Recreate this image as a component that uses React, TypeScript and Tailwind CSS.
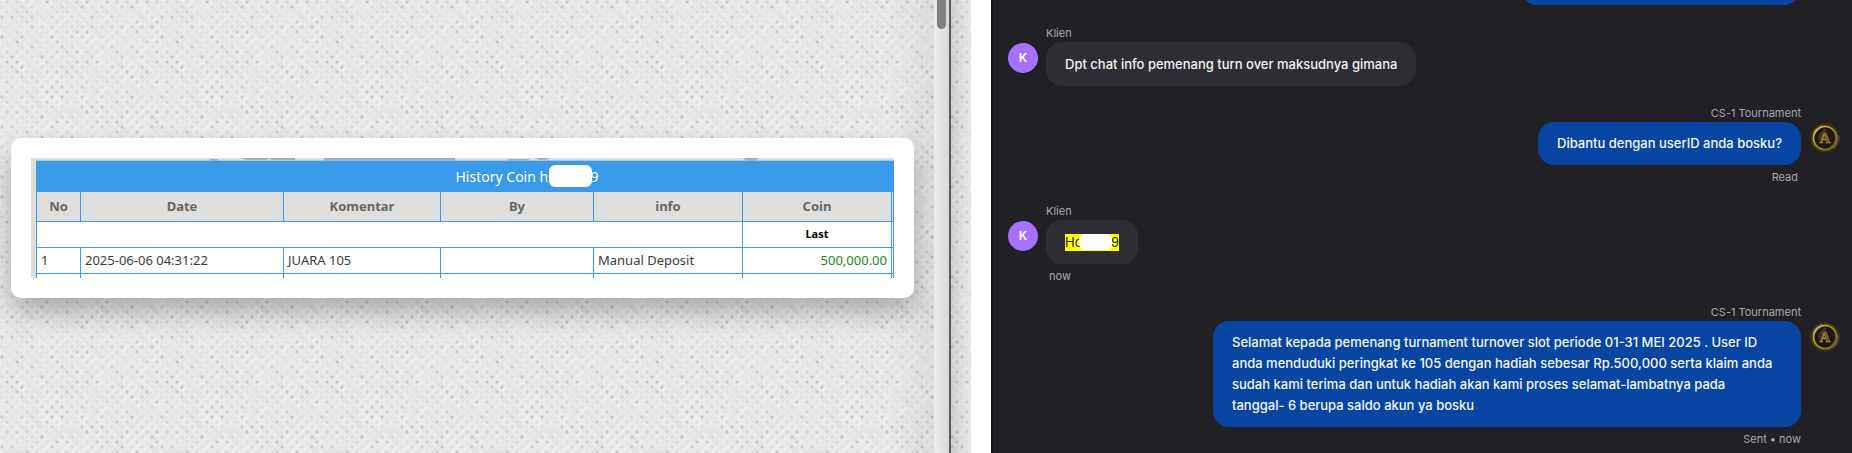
import { useId } from 'react'
import clsx from 'clsx'

const columns = ['No', 'Date', 'Komentar', 'By', 'info', 'Coin']

const rows = [
  { no: '1', date: '2025-06-06 04:31:22', comment: 'JUARA 105', by: '', info: 'Manual Deposit', coin: '500,000.00' },
]

const noise = (n: number) => {
  const v = Math.sin(n * 127.1 + 11.7) * 43758.5453
  return v - Math.floor(v)
}

// dots of the paper texture, one tile of 160x160
const dots = Array.from({ length: 512 }, (_, i) => {
  const row = Math.floor(i / 16)
  return {
    x: (i % 16) * 10 + (row % 2 ? 2 : 7),
    y: row * 5 + 2,
    opacity: 0.04 + noise(i) * noise(i) * 0.18,
  }
})

function PaperTexture() {
  const id = useId()
  return (
    <svg className="absolute inset-0 h-full w-full" aria-hidden="true">
      <defs>
        <pattern id={id} width="160" height="160" patternUnits="userSpaceOnUse">
          {dots.map((d, i) => (
            <g key={i}>
              <path
                d={`M${d.x - 5} ${d.y} l5 -5 M${d.x} ${d.y + 5} l5 -5`}
                stroke={noise(i + 900) > 0.5 ? '#dfdfdf' : '#f1f1f1'}
                strokeWidth="2"
                opacity="0.5"
              />
              <circle cx={d.x} cy={d.y} r="2.2" fill="#444" opacity={d.opacity * 0.4} />
              <circle cx={d.x} cy={d.y} r="1.1" fill="#444" opacity={d.opacity} />
            </g>
          ))}
        </pattern>
      </defs>
      <rect width="100%" height="100%" fill={`url(#${id})`} />
    </svg>
  )
}

// sliver of the banner that shows above the table
function BannerEdge() {
  return (
    <svg className="block h-[3px] w-full" viewBox="0 0 858 3" preserveAspectRatio="none" aria-hidden="true">
      <g fill="#a9b0b8">
        <rect x="174" y="1" width="8" height="2" />
        <path d="M204 0 H259 V2 H235 V1 H231 V2 H211Z" />
        <path d="M289 0 H419 V3 H287Z" />
        <path d="M471 1 H493 V3 H473Z" />
        <path d="M499 0 H515 L509 2 H503Z" />
        <path d="M707 0 H723 L719 3 H711Z" />
      </g>
      <rect y="2" width="858" height="1" fill="#8fb0cc" opacity="0.6" />
    </svg>
  )
}

function HistoryTable() {
  const cell = 'border border-[#3a99e8] px-1'
  return (
    <div className="h-[120px] overflow-hidden bg-[#deded9] pl-[5px]">
      <BannerEdge />
      <table className="w-full table-fixed border-collapse bg-white text-[13px] text-[#3c3c3c]">
        <colgroup>
          <col className="w-[44px]" />
          <col className="w-[203px]" />
          <col className="w-[157px]" />
          <col className="w-[153px]" />
          <col className="w-[149px]" />
          <col className="w-[149px]" />
          <col />
        </colgroup>
        <thead>
          <tr className="h-[30px] bg-[#3a9aea] text-[14px] text-white">
            <th colSpan={7} className="border border-[#3a99e8] p-0 pl-[124px] font-normal">
              <span className="relative inline-flex w-[143px] justify-between leading-5 whitespace-nowrap">
                <span>History Coin h</span>
                <span>9</span>
                <span className="absolute right-[7px] bottom-0 h-[22px] w-[43px] rounded-md bg-white" />
              </span>
            </th>
          </tr>
          <tr className="h-[30px] bg-[#dedede] text-[#666]">
            {columns.map((name) => (
              <th key={name} className="border border-[#3a99e8] p-0 font-bold">{name}</th>
            ))}
            <th className="border border-[#3a99e8] p-0" />
          </tr>
        </thead>
        <tbody>
          <tr className="h-[26px]">
            <td colSpan={5} className="border border-[#3a99e8] p-0" />
            <td className="border border-[#3a99e8] p-0 text-center text-[11px] font-bold text-black">Last</td>
            <td className="border border-[#3a99e8] p-0" />
          </tr>
          {rows.map((row) => (
            <tr key={row.no} className="h-[26px]">
              <td className={cell}>{row.no}</td>
              <td className={cell}>{row.date}</td>
              <td className={cell}>{row.comment}</td>
              <td className={cell}>{row.by}</td>
              <td className={cell}>{row.info}</td>
              <td className={clsx(cell, 'text-right text-[#1a8a1a]')}>{row.coin}</td>
              <td className="border border-[#3a99e8] p-0" />
            </tr>
          ))}
          <tr className="h-[26px]">
            {[...columns, 'more'].map((name) => (
              <td key={name} className="border border-[#3a99e8] p-0" />
            ))}
          </tr>
        </tbody>
      </table>
    </div>
  )
}

function HistoryPanel() {
  return (
    <section className="relative flex bg-[#e9e9e9] font-['Noto_Sans',sans-serif]">
      <PaperTexture />
      <div className="relative flex min-w-0 flex-1 items-start bg-linear-to-r from-transparent from-95% to-black/5 pt-[138px] pr-5 pl-[11px]">
        <div className="w-full rounded-[10px] bg-white p-5 shadow-[0_14px_26px_rgba(0,0,0,0.26)]">
          <HistoryTable />
        </div>
      </div>
      <div className="relative w-[15px] bg-linear-to-r from-[#ececec] to-[#d8d8d8] px-[3px]">
        <div className="h-[29px] rounded-b-full bg-[#808080]" />
      </div>
      <div className="relative w-[2px] bg-[#5c5c5c]" />
      <div className="relative w-5 bg-linear-to-r from-black/10 to-transparent" />
    </section>
  )
}

function AgentAvatar() {
  return (
    <svg className="h-[30px] w-[30px]" viewBox="0 0 30 30" role="img" aria-label="CS-1 Tournament">
      <defs>
        <radialGradient id="glow">
          <stop offset="0.6" stopColor="#14120c" />
          <stop offset="0.85" stopColor="#4a4014" />
          <stop offset="1" stopColor="#262318" />
        </radialGradient>
        <linearGradient id="ring" x1="0" y1="0" x2="1" y2="1">
          <stop offset="0" stopColor="#e3cf62" />
          <stop offset="0.5" stopColor="#a88c2a" />
          <stop offset="1" stopColor="#77621b" />
        </linearGradient>
      </defs>
      <circle cx="15" cy="15" r="15" fill="url(#glow)" />
      <path d="M4 7 L12 1 L12 5 L3 14Z" fill="#8f8a66" opacity="0.45" />
      <path d="M25 11 L29.5 13 A15 15 0 0 1 24 26 L20 22Z" fill="#5a5746" opacity="0.6" />
      <circle cx="15" cy="15" r="11.5" fill="none" stroke="url(#ring)" strokeWidth="1.6" />
      <circle cx="15" cy="15" r="9.8" fill="#1c1912" />
      <path d="M8 13 L14 5.5 L17 6 L9 19Z" fill="#77735c" opacity="0.35" />
      <text
        x="15"
        y="20"
        textAnchor="middle"
        fontFamily="Liberation Serif, serif"
        fontSize="15"
        fontWeight="bold"
        fill="#6d5014"
        stroke="#c9a244"
        strokeWidth="0.5"
      >
        A
      </text>
    </svg>
  )
}

type MessageProps = {
  status?: string
  className?: string
  children: React.ReactNode
}

function ClientMessage({ status, className, children }: MessageProps) {
  return (
    <div className={clsx('flex items-start gap-2', className)}>
      <div className="mt-[21px] flex h-[30px] w-[30px] shrink-0 items-center justify-center rounded-full bg-[#a472ff] text-[12px] font-semibold text-white">
        K
      </div>
      <div className="flex flex-col items-start text-[11px] text-[#a9a8ae]">
        <span className="h-5 leading-[22px]">Klien</span>
        <div className="rounded-2xl bg-[#2e2d33] px-[19px] py-[11px] text-[13px] leading-[22px] font-medium text-[#f2f2f3]">
          {children}
        </div>
        {status && <span className="pl-[3px] leading-6">{status}</span>}
      </div>
    </div>
  )
}

function AgentMessage({ status, className, children }: MessageProps) {
  return (
    <div className={clsx('flex items-start justify-end gap-[9px]', className)}>
      <div className="flex flex-col items-end text-[11px] text-[#a9a8ae]">
        <span className="h-5 leading-[22px]">CS-1 Tournament</span>
        <div className="max-w-[588px] rounded-2xl bg-[#0745a2] px-[19px] py-[11px] text-[13px] leading-[21px] font-medium text-[#f4f6fb]">
          {children}
        </div>
        <span className={clsx('leading-6', status === 'Read' && 'pr-[3px]')}>{status}</span>
      </div>
      <div className="mt-[21px] shrink-0">
        <AgentAvatar />
      </div>
    </div>
  )
}

function ChatPanel() {
  return (
    <section className="border-l-2 border-[#19181d] bg-[#212025] pr-3 pl-[15px] font-['Inter',sans-serif]">
      {/* end of the previous message, scrolled out of view */}
      <div className="flex h-[5px] items-end justify-end overflow-hidden pr-[40px]">
        <div className="h-11 w-[279px] shrink-0 rounded-2xl bg-[#0745a2]" />
      </div>
      <ClientMessage className="mt-[17px]">Dpt chat info pemenang turn over maksudnya gimana</ClientMessage>
      <AgentMessage className="mt-4" status="Read">Dibantu dengan userID anda bosku?</AgentMessage>
      <ClientMessage className="mt-[11px]" status="now">
        <mark className="relative inline-flex w-[54px] justify-between bg-[#ffff00] leading-[17px] font-normal text-[#26262b]">
          <span>Ho</span>
          <span>p</span>
          <span>9</span>
          <span className="absolute top-0 right-[7px] h-4 w-[33px] rounded-md bg-white" />
        </mark>
      </ClientMessage>
      <AgentMessage className="mt-[13px]" status="Sent • now">
        Selamat kepada pemenang turnament turnover slot periode 01-31 MEI 2025 . User ID anda menduduki
        peringkat ke 105 dengan hadiah sebesar Rp.500,000 serta klaim anda sudah kami terima dan untuk
        hadiah akan kami proses selamat-lambatnya pada <span className="whitespace-nowrap">tanggal- 6</span> berupa
        saldo akun ya bosku
      </AgentMessage>
    </section>
  )
}

export default function App() {
  return (
    <main className="grid min-h-screen grid-cols-[971fr_20px_861fr] bg-white">
      <HistoryPanel />
      <div />
      <ChatPanel />
    </main>
  )
}
